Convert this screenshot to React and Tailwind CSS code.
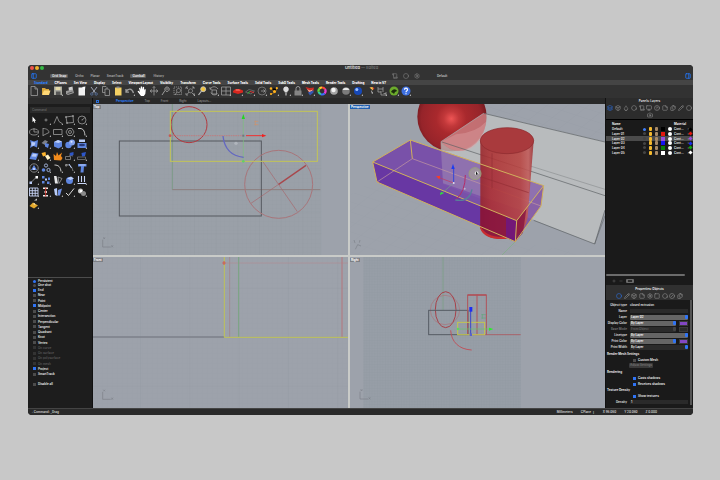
import React, { useState } from 'react';
import {
    Box,
    Circle,
    Files,
    Hexagon,
    Layers,
    Monitor,
    PanelLeft,
    PanelRight,
    Pencil,
    Plus,
    Minus,
    Settings,
    Square,
    StickyNote,
    CircleHelp,
    Droplet,
    Camera,
    CircleSlash,
    Scroll,
} from 'lucide-react';

const toggles = [
    { label: 'Grid Snap', on: true },
    { label: 'Ortho', on: false },
    { label: 'Planar', on: false },
    { label: 'SmartTrack', on: false },
    { label: 'Gumball', on: true },
    { label: 'History', on: false },
];

const toolTabs = [
    'Standard', 'CPlanes', 'Set View', 'Display', 'Select', 'Viewport Layout',
    'Visibility', 'Transform', 'Curve Tools', 'Surface Tools', 'Solid Tools',
    'SubD Tools', 'Mesh Tools', 'Render Tools', 'Drafting', 'New in V7',
];

const viewTabs = ['Perspective', 'Top', 'Front', 'Right', 'Layouts...'];

const line = { fill: 'none', stroke: '#9c9c9c', strokeWidth: 0.8 };

// Every glyph is drawn on a 12 x 12 grid
const standardTools = [
    { id: 'New', art: <path {...line} d="M3 1.5h4l2.5 2.5v6.500H3zM7 1.500V4h2.500" /> },
    { id: 'Open', art: <><path fill="#d9a63a" d="M2 3h3l1 1h3v5.500H2z" /><path fill="#ffd876" d="M4 5.500h6.500L9 10H2z" /></> },
    { id: 'Save', more: true, art: <><path fill="#a9a9a0" d="M2 1.500h8v8.500H2z" /><path fill="#565656" d="M4 6.500h4.500V10H4z" /><path fill="#e3d9a8" d="M3.500 2h5v3h-5z" /></> },
    { id: 'Print', art: <><path fill="#d0d0d0" d="M4.500 2.500l4-1 .5 3.500-4 1z" /><path fill="#9b9b9b" d="M2 6l7-1.500 1 3.500-6 2-2-1z" /><path fill="#4f4f4f" d="M3.500 8l5-1.500v1l-5 1.500z" /></> },
    { id: 'Properties', art: <><path fill="#f1f1f1" d="M2.500 2.500h5.500l1 1V10.500h-6.500z" /><path fill="#fff" d="M6 2l3.500-.5-1 3.500z" /></> },
    { id: 'Cut', art: <><path fill="none" stroke="#aeb6c4" strokeWidth="0.9" d="M3 2l4.500 6M9 2L4.500 8" /><circle cx="3.800" cy="9" r="1.200" fill="none" stroke="#53698f" /><circle cx="8.200" cy="9" r="1.200" fill="none" stroke="#53698f" /></> },
    { id: 'Copy', art: <><path {...line} d="M2.500 1.500H6l1 1v5H2.500z" /><path fill="#333" stroke="#9c9c9c" strokeWidth="0.800" d="M5 4h3.500l1 1v5.500H5z" /></> },
    { id: 'Paste', art: <><path fill="#f2cf63" d="M3 2.500h6.500v8H3z" /><path fill="#8d8d8d" d="M4.500 1.500h3v1.800h-3z" /></> },
    { id: 'Undo', more: true, art: <path fill="none" stroke="#9c9c9c" strokeWidth="1.300" d="M2 7c2-4 6-4 7.500 1M2 4v3.200h3" /> },
    { id: 'Pan', art: <path fill="#fff" d="M3 3l1.200-.3.600 2V1.500h1.200l.5 3 .4-2.700 1.200.2v3.500l.7-1.500 1 .5-.5 4.500-1.500 2H5L1.500 6.500l1-.8 1.500 1.200z" /> },
    { id: 'Rotate view', art: <path fill="none" stroke="#929292" strokeWidth="0.900" d="M6 1.500v9M2 6h8M4 4.500L2 6l2 1.500M8 4.500L10 6 8 7.500M4.800 2.800L6 1.500l1.200 1.300" /> },
    { id: 'Zoom', art: <path fill="none" stroke="#9c9c9c" strokeWidth="1" d="M5 5.500L2 10M7 2a2.200 2.200 0 1 0 .1 0M5.500 4h3" /> },
    { id: 'Zoom window', art: <><path {...line} strokeDasharray="1.200 .8" d="M2 2h7.500v7.500H2z" /><path {...line} d="M6.500 3.500a2 2 0 1 0 .1 0M5 7l-2 3" /></> },
    { id: 'Zoom extents', more: true, art: <path {...line} d="M2 4V2h2M8 2h2v2M10 8v2M2 8v2h2M6.500 3.800a2 2 0 1 0 .1 0M5 7L3 9.500M8 8l2 2M2 2l2 2M10 2L8.500 3.500" /> },
    { id: 'Zoom selected', art: <><circle cx="7.200" cy="4.200" r="2.500" fill="#f0c33c" stroke="#c9c9c9" strokeWidth="0.800" /><path stroke="#b8b8b8" strokeWidth="1.200" d="M5.500 6L2.500 10" /></> },
    { id: 'Undo view', more: true, art: <path {...line} d="M2 4c2-3 6-3 8 0M2 2v2.200h2M4 5h4.500v4H4zM3 7.500c1 3 5 3 6.500 1" /> },
    { id: 'Four viewports', more: true, art: <path {...line} d="M1.500 2h9v8h-9zM6 2v8M1.500 6h9" /> },
    { id: 'Set view', more: true, art: <><path fill="#d8271f" d="M1 6l2.500-2h4L11 5.500v2L6 9 1 7.500z" /><path fill="#ff8a7a" d="M4 4.500h3l1.500 1H3.500z" /></> },
    { id: 'CPlane', more: true, art: <><path {...line} stroke="#6f6f6f" d="M1.500 7L5 4.500l5.500 1.500L7 9z" /><path stroke="#d33" d="M6 6.500l4 1" /><path stroke="#3b3" d="M6 6.500l-2.500 2" /></> },
    { id: 'Set named view', more: true, art: <><circle cx="6" cy="6" r="4" {...line} stroke="#7f7f7f" /><path {...line} d="M5 6h4M7.500 4.500L9 6 7.500 7.500" /></> },
    { id: 'Object snaps', more: true, art: <><path stroke="#b97a1a" strokeWidth="0.700" d="M3 3.500l4 4 2-4M3 9l4-1.500" /><g fill="#ffb21e"><circle cx="3" cy="3.500" r="1.300" /><circle cx="8.800" cy="3.200" r="1.100" /><circle cx="6.500" cy="6.500" r="1.500" /><circle cx="3" cy="9" r="1.100" /></g></> },
    { id: 'Hide', more: true, art: <><path fill="#dcdcdc" d="M6 1.500a2.700 2.700 0 0 0-1.500 5l.3 1h2.400l.3-1a2.700 2.700 0 0 0-1.500-5z" /><path fill="#8a8a8a" d="M5 8h2v2.500H5z" /></> },
    { id: 'Lock', more: true, art: <><path fill="none" stroke="#999" d="M4 6V3.500a2 2 0 0 1 4 0V6" /><path fill="#858585" d="M2.500 5.500h7v5h-7z" /></> },
    { id: 'Edit layers', more: true, art: <><path fill="#c62b23" d="M1.500 2l4 1L10 2.500 9.500 6 5.500 8z" /><path fill="#f2b29a" d="M3 4l3 1.500L9 4.500 6 8z" /><path fill="#3457b4" d="M4 7.500l5.500-2.200v2.200L6 10.500z" /></> },
    { id: 'Object colour', art: <g fill="none" strokeWidth="2.200"><path stroke="#ff4b3a" d="M6 2.500a3.500 3.500 0 0 1 3 1.700" /><path stroke="#e43bd0" d="M9 4.200A3.500 3.500 0 0 1 8.500 8.500" /><path stroke="#3b6cff" d="M8.500 8.500A3.500 3.500 0 0 1 5 9.300" /><path stroke="#30c9a0" d="M5 9.300A3.500 3.500 0 0 1 2.600 6.800" /><path stroke="#63d83a" d="M2.600 6.800A3.500 3.500 0 0 1 3.500 3.500" /><path stroke="#ffc928" d="M3.500 3.500A3.500 3.500 0 0 1 6 2.500" /></g> },
    { id: 'Shade', art: <><circle cx="6" cy="6" r="3.800" fill="#a5a5a5" /><circle cx="5.500" cy="5" r="2.200" fill="#f2f2f2" /></> },
    { id: 'Render preview', more: true, art: <><circle cx="6" cy="6" r="3.800" fill="#7b7b7b" /><path fill="#e6e6e6" d="M2.500 5a3.800 3.800 0 0 1 7 0z" /></> },
    { id: 'Render', more: true, art: <><circle cx="6" cy="6" r="4" fill="#1648b8" /><circle cx="4.800" cy="4.500" r="1.500" fill="#9cc2ff" /></> },
    { id: 'Options', art: <><path fill="#e03a2d" d="M8 2l2.500 1L9 5z" /><path fill="#ffc54a" d="M5.500 2.500L8.500 2 9 5.500z" /><path fill="#ddd" d="M7 5l2 3-1 1z" /></> },
    { id: 'Dimension', more: true, art: <path {...line} d="M2 2v5h3M2 4h5M7 2v5M5 6v4h5V7M7.500 8.500H10" /> },
    { id: 'Grasshopper', more: true, art: <><circle cx="6" cy="6" r="4.500" fill="#6cab2c" /><path fill="#1b2b0c" d="M3 7c2-4 5-3 6-1l-2 1-1 2-1-1z" /></> },
    { id: 'Help', more: true, art: <><circle cx="6" cy="6" r="4.500" fill="#3d6fe0" /><path fill="none" stroke="#fff" strokeWidth="1.200" d="M4.500 4.700c0-2 3-2 3 0C7.500 6 6 5.800 6 7.300M6 8.200v1" /></> },
];

const blue = '#5f86e0';
const pale = '#b9ccf8';

const paletteTools = [
    { id: 'Select', art: <path fill="#fff" d="M4.500 2.500v5.500l1.300-1 .8 2 .8-.4-.8-1.800h1.500z" /> },
    { id: 'Point', more: true, art: <circle cx="6" cy="6" r="1" {...line} /> },
    { id: 'Polyline', more: true, art: <path {...line} d="M2 9.500L5 2.500l2 5 3 2" /> },
    { id: 'Rectangle points', more: true, art: <path {...line} d="M2 3l7-1 .5 6.500L3 9zM1.500 2.500h1v1h-1zM8.500 1.500h1v1h-1zM2.500 8.500h1v1h-1z" /> },
    { id: 'Circle', more: true, art: <><circle cx="6" cy="6" r="4" {...line} /><path {...line} d="M6 6l3-2.500M5.500 6h1" /></> },
    { id: 'Ellipse', more: true, art: <><ellipse cx="6" cy="6" rx="4.500" ry="3" {...line} /><path {...line} d="M6 2v4h4" /></> },
    { id: 'Arc', more: true, art: <path {...line} d="M3 2v8M3 2.500c4 0 6 2 6 4L3 9.500" /> },
    { id: 'Rectangle', more: true, art: <path {...line} d="M1.500 3.500h8.500v5H1.500z" /> },
    { id: 'Polygon', more: true, art: <><path {...line} d="M4 2.500h4L10 6 8 9.500H4L2 6z" /><circle cx="6" cy="6" r="1.500" {...line} /></> },
    { id: 'Fillet', more: true, art: <path fill="none" stroke="#ccc" strokeWidth="1" d="M2 2.500h2c3 0 4.500 2 5 7" /> },
    { id: 'Surface', more: true, art: <><path fill={blue} d="M2 2l4 1.500L10 2 9 9.500 5.500 8 2 10l1-4z" /><path fill={pale} d="M3.500 4l4 .5-1 3-3 .5z" /></> },
    { id: 'Loft', more: true, art: <><path fill="#7c8089" d="M1.500 5L5 2l3 1.500L5 7z" /><path fill={blue} d="M5 5l4 1-1 4-3-1.500z" /></> },
    { id: 'Box', more: true, art: <><path fill={blue} d="M2 4l4-2 4 1.500v5L6.500 10.500 2 8.500z" /><path fill={pale} d="M2 4l4-2 4 1.500L6.500 5z" /></> },
    { id: 'Boolean', more: true, art: <><circle cx="4.500" cy="7" r="3.200" fill={blue} /><circle cx="8" cy="4.500" r="3" fill="#83a3ee" /><circle cx="7.500" cy="3.800" r="1" fill="#dfe8ff" /></> },
    { id: 'Pipe', more: true, art: <><path fill={blue} d="M1.500 5h9v5h-9z" /><path fill={pale} d="M3 1.500h6V4H3z" /><ellipse cx="6" cy="7" rx="3" ry="1.200" fill="#26397a" /></> },
    { id: 'Extrude', more: true, art: <><path fill={blue} d="M1.500 9L4 2.500l6.500 1L8 10z" /><path fill={pale} d="M3.500 6.500l1.500-3 4 .7-1 2.500z" /></> },
    { id: 'Join', more: true, art: <><path fill="#ffb62e" d="M1.500 3l4-1 .5 3.500-3 1z" /><path fill="#fff1c4" d="M5 6l3-1.500L10.500 8 7.500 10z" /></> },
    { id: 'Explode', art: <path fill="#f08a1c" d="M2 10L1.500 4l2.500 2 1-4 1.500 3.500L10 2.500 9 6l1.500 2L9 10.500z" /> },
    { id: 'Trim', more: true, art: <><path {...line} stroke="#888" d="M1.500 6.500h5v3h-5zM5 5l4 1" /><path fill="#2d56c8" d="M5.500 3l4-1v3l-3 1z" /></> },
    { id: 'Split', more: true, art: <><path {...line} stroke="#777" d="M1.500 7h8v2.500h-8z" /><path fill="#2d56c8" d="M5.500 3l4.500-1-1 4-3 .5z" /></> },
    { id: 'Group', more: true, art: <><circle cx="6" cy="6" r="4.200" {...line} /><path fill={blue} d="M3 8l3-5 3 5z" /><path fill={pale} d="M5 6h2v2H5z" /></> },
    { id: 'Ungroup', more: true, art: <><circle cx="6" cy="3.500" r="1.600" fill="none" stroke={pale} strokeWidth="0.800" /><circle cx="3.500" cy="8" r="1.800" fill={blue} /><circle cx="8.500" cy="8" r="1.600" fill="none" stroke={pale} strokeWidth="0.800" /></> },
    { id: 'Curve', more: true, art: <path fill="none" stroke="#ccc" d="M2.500 3c4 0 6 2 6.500 6.500" /> },
    { id: 'Edit points', more: true, art: <><path {...line} d="M2 3c4-1 6 2 7 6M1.500 2.500h1.500v1.500H1.500z" /><path stroke={pale} d="M5 2l2.500 4" /></> },
    { id: 'Text', art: <><path fill={blue} d="M2 2h8.500v2.500H8L7.500 10.500h-3L5 4.500H2z" /><path fill={pale} d="M3 2.500h6.500v1H3z" /></> },
    { id: 'Move', more: true, art: <><path {...line} d="M3 8.500l5-5" /><path fill={pale} d="M1.500 7.500H4V10H1.500z" /><path fill="#fff" d="M7.500 2H10v2.500H7.500z" /></> },
    { id: 'Copy objects', more: true, art: <g fill={blue}><path d="M2 2h2.500v2.500H2zM2 7h2.500v2.500H2z" /><path fill={pale} d="M5 4.500h2V6.500H5z" /><path d="M8 3.500h2V6H8zM7 7.500h2.500V10H7z" /></g> },
    { id: 'Rotate', more: true, art: <><path fill="#e8e8e8" d="M2 2h2.500L6 9.500H3z" /><path {...line} d="M6 3l4 1.500L7 9.500z" /></> },
    { id: 'Scale', more: true, art: <><circle cx="5.500" cy="6.500" r="3.500" fill={blue} /><path fill={pale} d="M3 4.500L7 2.500l3 2L6.500 6z" /></> },
    { id: 'Array', more: true, art: <path fill="none" stroke="#c9d6f8" strokeWidth="1.100" d="M2.500 2v6M5.500 2v6M8.500 2v6M1.500 9.500h8.500" /> },
    { id: 'Grid array', more: true, art: <path fill="none" stroke="#c9d6f8" strokeWidth="0.900" d="M1.500 2h8.500v8H1.500zM4.300 2v8M7.200 2v8M1.500 4.700H10M1.500 7.300H10" /> },
    { id: 'Align', more: true, art: <><path fill="#f0eeee" d="M3 1.500h5V3H3zM4.500 5h2.500v2H4.500zM3 9h5v1.500H3z" /><path stroke="#d3362c" d="M5.700 1.500v9" /></> },
    { id: 'Bend', more: true, art: <><path fill={pale} d="M2 3l3-1 .5 8-2.500-1z" /><path fill="#6f91e6" d="M6 4l4-1.500L8 9.500H6z" /></> },
    { id: 'Check', more: true, art: <path fill="none" stroke="#ddd" strokeWidth="1" d="M2 7l2.500 2.500L10 2.500" /> },
    { id: 'Analyze', more: true, art: <><circle cx="4.500" cy="5" r="2.500" fill="#cfcfcf" /><circle cx="7.500" cy="7.500" r="2.500" fill="#8b8b8b" /><path fill="#fff" d="M4 4h2v2H4z" /></> },
    { id: 'Layers', more: true, art: <><path fill="#e3a92d" d="M1.500 8L5 4.500l5 3L6 10.500z" /><path fill="#fff0c2" d="M5 6l1.500-1 1 2z" /><path fill="#ccc" d="M6 2.500L9 .5v2z" /></> },
];

const osnaps = [
    { label: 'End', on: true }, { label: 'Near' }, { label: 'Point' },
    { label: 'Midpoint', on: true }, { label: 'Center' }, { label: 'Intersection' },
    { label: 'Perpendicular' }, { label: 'Tangent' }, { label: 'Quadrant' },
    { label: 'Knot' }, { label: 'Vertex' }, { label: 'On curve', dim: true },
    { label: 'On surface', dim: true }, { label: 'On polysurface', dim: true },
    { label: 'On mesh', dim: true }, { label: 'Project', on: true }, { label: 'SmartTrack' },
];

const layers = [
    { name: 'Default', swatch: 'bg-black', dot: 'bg-black', current: true },
    { name: 'Layer 01', swatch: 'bg-[#e3170f]', dot: 'bg-[#e3170f]' },
    { name: 'Layer 02', swatch: 'bg-[#9650d8]', dot: 'bg-[#9650d8]', selected: true },
    { name: 'Layer 03', swatch: 'bg-[#1414f0]', dot: 'bg-[#1a2cf0]' },
    { name: 'Layer 04', swatch: 'bg-[#0c7d0c]', dot: 'bg-[#12a012]' },
    { name: 'Layer 05', swatch: 'bg-white', dot: 'bg-white' },
];

const layerPanelIcons = [Layers, Box, Droplet, Hexagon, Scroll, Monitor, CircleHelp, StickyNote, Files, Pencil, Circle];
const propertyIcons = [Circle, Pencil, Box, StickyNote, Settings, Square, Hexagon, CircleSlash, Files];

const ToolButton = ({ tool }) => (
    <button aria-label={tool.id} className="size-3 shrink-0">
        <svg viewBox="0 0 12 12" className="size-3">
            {tool.art}
            {tool.more && <path fill="#ddd" d="M9.500 10.800L11 9.300v1.500z" />}
        </svg>
    </button>
);

const Check = ({ label, on, dim, type = 'checkbox', name }) => (
    <label className={`flex items-center gap-0.5 h-1 font-semibold ${dim ? 'text-[#5a5a5a]' : 'text-[#f0f0f0]'}`}>
        <input
            type={type}
            name={name}
            defaultChecked={on}
            disabled={dim}
            className={`appearance-none size-[3px] bg-[#4c4c4c] checked:bg-[#2f74f5] disabled:bg-[#333] ${type === 'radio' ? 'rounded-full' : ''}`}
        />
        {label}
    </label>
);

const WindowHeader = () => (
    <header className="bg-[#333]">
        <div className="flex h-1.5 items-center px-0.5">
            <div className="flex gap-px">
                <button aria-label="Close" className="size-1 rounded-full bg-[#f0524b]" />
                <button aria-label="Minimize" className="size-1 rounded-full bg-[#f0b32e]" />
                <button aria-label="Full screen" className="size-1 rounded-full bg-[#35bb45]" />
            </div>
            <h1 className="flex-1 pr-3 text-center text-[4px] font-semibold text-[#e0e0e0]">
                Untitled <span className="font-normal text-[#8e8e8e]">— Edited</span>
            </h1>
        </div>

        <div className="flex h-[9px] items-center pl-[3px] pr-0.5">
            <button aria-label="Toggle left sidebar"><PanelLeft className="size-1.5 text-[#2479ff]" strokeWidth={3} /></button>
            <div className="ml-[13px] flex flex-7 items-center gap-[7px]">
                {toggles.map((t) => (
                    <button
                        key={t.label}
                        className={`h-1 rounded-[1px] font-semibold leading-[4px] ${t.on ? 'bg-[#5b5b5b] px-0.5 text-white' : 'text-[#b4b4b4]'}`}
                    >
                        {t.label}
                    </button>
                ))}
            </div>
            <div className="flex flex-6 items-center gap-[5px] text-[#8a8a8a]">
                <Scroll className="size-1.5" />
                <Circle className="size-1.5" />
                <Settings className="size-1.5" />
                <span className="ml-3 font-semibold text-[#c5c5c5]">Default</span>
            </div>
            <button aria-label="Toggle right sidebar"><PanelRight className="size-1.5 text-[#2479ff]" strokeWidth={3} /></button>
        </div>

        <nav className="flex h-[5px] items-center gap-[7px] bg-[#454545] px-1.5 font-extrabold text-white">
            {toolTabs.map((tab, i) => (
                <a key={tab} href="#tools" className={`whitespace-nowrap ${i === 0 ? 'text-[#2b80ff]' : ''}`}>{tab}</a>
            ))}
        </nav>

        <div className="flex h-[13px] bg-[#323232]">
            {standardTools.map((tool) => <ToolButton key={tool.id} tool={tool} />)}
        </div>
    </header>
);

const LeftPanel = () => (
    <aside className="flex w-[65px] shrink-0 flex-col border-r border-[#111] bg-[#1d1d1d]">
        <div className="h-1.5 bg-[#2c2c2c]" />
        <div className="px-0.5 pt-[3px]">
            <input
                aria-label="Command"
                placeholder="Command"
                className="block h-1.5 w-full bg-[#2b2b2b] px-0.5 text-[3px] placeholder:text-[#777]"
            />
        </div>
        <div className="mt-px grid w-[60px] grid-cols-5">
            {paletteTools.map((tool) => <ToolButton key={tool.id} tool={tool} />)}
        </div>
        <div className="mt-auto flex h-[131px] flex-col border-t border-[#4c4c4c] pl-[5px] pt-px">
            <Check type="radio" name="snapmode" label="Persistent" on />
            <Check type="radio" name="snapmode" label="One shot" />
            <div className="mt-px mb-1.5 flex h-[88px] flex-col justify-between">
                {osnaps.map((s) => <Check key={s.label} {...s} />)}
            </div>
            <Check label="Disable all" />
        </div>
    </aside>
);

const Viewport = ({ title, active, viewBox, children }) => (
    <section className="relative min-h-0 min-w-0 overflow-hidden bg-[#9da2ab]">
        <svg viewBox={viewBox} preserveAspectRatio="xMinYMin slice" className="absolute inset-0 size-full">
            {children}
        </svg>
        <button className={`absolute left-0 top-px h-1 px-px text-[3px] leading-[4px] font-bold text-white ${active ? 'bg-[#1f5fb0]' : 'bg-[#7d8085]'}`}>
            {title}
        </button>
    </section>
);

const AxisMark = ({ x, y }) => (
    <g fill="none" stroke="#7c8188" strokeWidth="2">
        <path d={`M${x} ${y - 22}v22h24`} />
        <path d={`M${x + 2} ${y - 29}l5 5M${x + 7} ${y - 29}l-5 5M${x + 26} ${y - 5}l5 6M${x + 31} ${y - 5}l-5 6`} />
    </g>
);

const TopView = () => (
    <Viewport title="Top" viewBox="9 12 765 453">
        <defs>
            <pattern id="gridTop" width="13" height="13" patternUnits="userSpaceOnUse">
                <path d="M0 0h13M0 0v13" stroke="#8e959e" strokeWidth="1" fill="none" />
            </pattern>
            <pattern id="gridTopMajor" x="52" y="9" width="65" height="65" patternUnits="userSpaceOnUse">
                <path d="M0 0h65M0 0v65" stroke="#878e97" strokeWidth="1.500" fill="none" />
            </pattern>
        </defs>
        <rect x="9" y="12" width="685" height="456" fill="#9aa0a8" />
        <rect x="9" y="12" width="685" height="456" fill="url(#gridTop)" opacity="0.600" />
        <rect x="9" y="12" width="685" height="456" fill="url(#gridTopMajor)" opacity="0.500" />
        <g fill="none" strokeWidth="3">
            <path d="M247 12v257" stroke="#6f9a78" strokeWidth="2" />
            <path d="M247 269h444" stroke="#8d7d7d" />
            <rect x="88" y="123" width="426" height="225" stroke="#55595f" />
            <circle cx="566" cy="253" r="102" stroke="#a8757a" />
            <path d="M483 310l83-57M518 184l104 151" stroke="#a8666b" strokeWidth="2" />
            <path d="M566 253l82-57" stroke="#a8474c" strokeWidth="4" />
            <circle cx="297" cy="74" r="54" stroke="#b33a40" />
            <rect x="241" y="34" width="441" height="150" stroke="#c3c556" />
            <path d="M240 107h220" stroke="#cf6f6f" strokeWidth="2" strokeDasharray="5 2" />
            <path d="M468 107h48" stroke="#f03030" />
            <path d="M460 50v134" stroke="#7ec07e" strokeWidth="2" />
            <path d="M399 108c4 38 26 60 62 64" stroke="#6468c0" strokeWidth="4" />
            <path d="M493 64h12M493 74h12M496 62v14" stroke="#d29268" strokeWidth="2" />
        </g>
        <path d="M516 102l13 5-13 5z" fill="#f02020" />
        <path d="M455 57l5-15 5 15z" fill="#22d522" />
        <rect x="457" y="104" width="6" height="6" fill="#707580" />
        <circle cx="460" cy="184" r="4" fill="#65cf65" />
        <circle cx="438" cy="130" r="5" fill="#b0b5bc" />
        <circle cx="240" cy="107" r="4" fill="#c65a55" />
        <AxisMark x={38} y={441} />
    </Viewport>
);

const PerspectiveView = () => (
    <Viewport title="Perspective" active viewBox="12 12 765 453">
        <defs>
            <radialGradient id="ball" cx="0.490" cy="0.530" r="0.540">
                <stop offset="0" stopColor="#ee5555" />
                <stop offset="0.200" stopColor="#c2383a" />
                <stop offset="0.400" stopColor="#a9292d" />
                <stop offset="0.800" stopColor="#96242a" />
                <stop offset="1" stopColor="#6d181d" />
            </radialGradient>
            <linearGradient id="tube">
                <stop offset="0" stopColor="#99252a" />
                <stop offset="0.200" stopColor="#ad3032" />
                <stop offset="0.750" stopColor="#b84340" />
                <stop offset="0.900" stopColor="#c25a58" />
                <stop offset="1" stopColor="#9c3034" />
            </linearGradient>
            <pattern id="gridPersp" width="44" height="30" patternUnits="userSpaceOnUse" patternTransform="skewY(18) skewX(-42)">
                <path d="M0 0h44M0 0v30" stroke="#8b929c" strokeWidth="1.500" fill="none" />
            </pattern>
        </defs>
        <path d="M12 285L90 238 510 425 778 470H12z" fill="url(#gridPersp)" opacity="0.350" />
        <path d="M420 12h357v112L413 40z" fill="url(#gridPersp)" opacity="0.450" />
        <path d="M508 425l-45 45" stroke="#7fb083" strokeWidth="2" />
        <circle cx="318" cy="50" r="104" fill="url(#ball)" />
        <path d="M285 125L413 40 777 125V330L746 432 291 252z" fill="#c2c5c4" fillOpacity="0.720" />
        <path d="M413 40l7 0q4 26-8 58-16 36-56 53-40 8-71-26z" fill="#c95358" fillOpacity="0.600" />
        <path d="M285 125l45-22q60-5 90-38-6 58-50 84-50 14-85-24z" fill="#dfa5a7" fillOpacity="0.400" />
        <g fill="none" stroke="#5b5f62" strokeWidth="2">
            <path d="M413 40l364 86M285 125l492 162M563 361l183 71 31-102" />
            <path d="M746 432l31-85" strokeWidth="1.500" />
            <path d="M553 198l224 70" stroke="#7e8284" strokeWidth="1.500" />
            <path d="M285 125L413 40M285 125l6 125" stroke="#a9abad" />
        </g>
        <path d="M80 186L193 120 593 257 512 362z" fill="#713fa8" fillOpacity="0.820" />
        <path d="M80 186L512 362 508 425 93 246z" fill="#632ba2" fillOpacity="0.900" />
        <path d="M512 362l81-105-8 61-77 107z" fill="#743a9e" fillOpacity="0.700" />
        <path d="M285 151l308 106-60 76-242-83z" fill="#a593b4" fillOpacity="0.450" />
        <path d="M93 246l106-70 386 142" fill="none" stroke="#c59ca0" strokeWidth="2" />
        <path d="M403 122c5-50 155-52 160 0l-18 230q-6 40-40 60-80 18-102-28z" fill="url(#tube)" fillOpacity="0.880" />
        <ellipse cx="483" cy="122" rx="80" ry="39" fill="#a93a3d" stroke="#8c2a2f" strokeWidth="2" />
        <path d="M403 317l108 45 30-36-10 72-23 27-26-10q-50 6-79-30z" fill="#83103f" fillOpacity="0.750" />
        <path d="M480 350l32 12-4 63-28-12z" fill="#68178e" fillOpacity="0.700" />
        <path d="M403 378q20 38 79 32l-4 7q-64 2-75-31z" fill="#c92d30" />
        <path d="M438 160v105M403 230l145 48" fill="none" stroke="#932d35" strokeWidth="2" />
        <path d="M80 186L193 120 593 257 512 362zM80 186l13 60 415 179 4-63M508 425l77-107 8-61M193 120l6 56" fill="none" stroke="#d0b05c" strokeWidth="3" />
        <path d="M323 249v-48" stroke="#3545d8" strokeWidth="3" />
        <path d="M316 207l5-16 5 16z" fill="#1d3cf0" />
        <path d="M323 249l-46-17" stroke="#c2355a" strokeWidth="2" />
        <path d="M270 229l13-1-3 10z" fill="#ff3b22" />
        <path d="M323 249l-34 30" stroke="#719c8b" strokeWidth="2" />
        <path d="M281 285l4-10 9 5z" fill="#2de03a" />
        <path d="M358 225q0 50-28 73" fill="none" stroke="#b52c68" strokeWidth="3" />
        <path d="M328 300q42 8 50-32" fill="none" stroke="#597f9a" strokeWidth="4" />
        <circle cx="356" cy="266" r="3" fill="#bcb1ce" />
        <circle cx="323" cy="249" r="3" fill="#e1dcef" />
        <circle cx="387" cy="221" r="18" fill="#a8a693" fillOpacity="0.600" stroke="#98a07c" strokeWidth="3" />
        <circle cx="392" cy="220" r="6" fill="#ddd" />
        <path d="M390 214v12l3-3 4 1z" fill="#111" />
        <path d="M28 448l7-14M35 434l10 4M24 420l3 9M42 420l-2 8" fill="none" stroke="#7c8188" strokeWidth="2" />
    </Viewport>
);

const FrontView = () => (
    <Viewport title="Front" viewBox="9 15 765 453">
        <defs>
            <pattern id="gridFront" x="5" y="2" width="15" height="15" patternUnits="userSpaceOnUse">
                <path d="M0 0h15M0 0v15" stroke="#8f96a0" strokeWidth="1" fill="none" />
            </pattern>
            <pattern id="gridFrontMajor" x="2" y="107" width="148" height="147" patternUnits="userSpaceOnUse">
                <path d="M0 0h148M0 0v147" stroke="#858c96" strokeWidth="2" fill="none" />
            </pattern>
        </defs>
        <rect x="9" y="15" width="766" height="456" fill="url(#gridFront)" opacity="0.700" />
        <rect x="9" y="15" width="766" height="456" fill="url(#gridFrontMajor)" opacity="0.500" />
        <g fill="none" strokeWidth="3">
            <path d="M9 255h394" stroke="#7c818a" strokeWidth="5" />
            <path d="M403 33h372" stroke="#bd8489" strokeWidth="2" strokeDasharray="4 2" />
            <path d="M419 15v240" stroke="#a28a90" />
            <path d="M446 15v240" stroke="#79a580" />
            <path d="M756 15v240" stroke="#b5777d" />
            <path d="M403 15v241h372" stroke="#bfc257" />
        </g>
        <path d="M397 33h10M402 27v12" stroke="#d4564c" strokeWidth="3" />
        <AxisMark x={38} y={442} />
    </Viewport>
);

const RightView = () => (
    <Viewport title="Right" viewBox="12 15 765 453">
        <defs>
            <pattern id="gridRight" x="5" y="0" width="8" height="8" patternUnits="userSpaceOnUse">
                <path d="M0 0h8M0 0v8" stroke="#858d96" strokeWidth="1" fill="none" />
            </pattern>
        </defs>
        <rect x="52" y="15" width="473" height="456" fill="#979ea7" />
        <rect x="52" y="15" width="473" height="456" fill="url(#gridRight)" opacity="0.600" />
        <g fill="none" strokeWidth="3">
            <path d="M291 15v160" stroke="#76a07e" strokeWidth="2" />
            <path d="M368 248h156" stroke="#a8636a" />
            <circle cx="297" cy="174" r="44" stroke="#aa7379" strokeWidth="2" />
            <ellipse cx="299" cy="173" rx="31" ry="54" stroke="#a84149" />
            <rect x="248" y="175" width="118" height="73" stroke="#555b64" />
            <path d="M365 248V128h56v120M393 128v120M365 130h56" stroke="#b0525a" />
            <rect x="335" y="211" width="81" height="37" stroke="#c3c54e" />
            <path d="M314 235c2 34 24 57 63 59" stroke="#bd555e" />
            <path d="M374 248v-73" stroke="#3b46c9" />
            <path d="M335 231h100" stroke="#63c663" strokeWidth="2" />
            <path d="M406 188h14M406 198h14M409 186v14" stroke="#62a77c" strokeWidth="2" />
        </g>
        <path d="M370 165h9v14h-9z" fill="#1c2cf5" />
        <path d="M429 227l13 4-13 5z" fill="#28f028" />
        <circle cx="336" cy="231" r="4" fill="#5ed65e" />
        <path d="M371 244h7v8h-7z" fill="#5b62c8" />
        <AxisMark x={42} y={441} />
    </Viewport>
);

const LayersPanel = () => (
    <section className="flex flex-1 flex-col">
        <div className="border-b border-black bg-[#2c2c2c]">
            <h2 className="flex h-1.5 items-center justify-center font-bold text-[#ddd]">Panels: Layers</h2>
            <div className="flex h-[7px] items-center justify-between px-px text-[#9a9a9a]">
                {layerPanelIcons.map((Icon, i) => (
                    <button key={i} aria-label={`Panel ${i + 1}`}>
                        <Icon className={`size-1.5 ${i === 0 ? 'text-[#2f78f5]' : ''}`} />
                    </button>
                ))}
            </div>
            <button aria-label="Snapshots" className="mx-auto block h-2"><Camera className="size-1.5 text-[#9a9a9a]" /></button>
        </div>
        <table className="mt-px h-[34px] w-full font-semibold leading-[4px] text-[#f0f0f0]">
            <thead>
                <tr className="h-1.5 text-left">
                    <th className="p-0 pl-1.5" colSpan={6}>Name</th>
                    <th className="p-0" colSpan={3}>Material</th>
                </tr>
            </thead>
            <tbody>
                {layers.map((l) => (
                    <tr key={l.name} className={l.selected ? 'bg-[#4b4b4b]' : ''}>
                        <td className="w-[37px] whitespace-nowrap p-0 pl-1.5">{l.name}</td>
                        <td className="w-1.5 p-0"><span className={`block size-[3px] rounded-full ${l.current ? 'bg-[#3f7df5]' : 'bg-[#444]'}`} /></td>
                        <td className="w-1.5 p-0"><span className="block h-1 w-[3px] rounded-[1px] bg-[#f5b92e]" /></td>
                        <td className="w-1.5 p-0"><span className="block h-1 w-[3px] rounded-[1px] bg-[#a88a66]" /></td>
                        <td className="w-[7px] p-0"><span className={`block h-1 w-1 ${l.swatch}`} /></td>
                        <td className="w-1.5 p-0"><span className="block size-1 rounded-full bg-white" /></td>
                        <td className="p-0">Cont...</td>
                        <td className="p-0">:</td>
                        <td className="w-1 p-0"><span className={`block size-[3px] rotate-45 ${l.dot}`} /></td>
                    </tr>
                ))}
            </tbody>
        </table>
        <div className="mt-auto mr-2 h-0.5 rounded-full bg-[#6b6b6b]" />
        <div className="flex h-[9px] items-center gap-[3px] px-1.5 text-[#8a8a8a]">
            <button aria-label="Add"><Plus className="size-1" /></button>
            <button aria-label="Remove"><Minus className="size-1" /></button>
            <button aria-label="Layer menu" className="flex h-1 w-2 items-center justify-center rounded-[1px] bg-[#6a6a6a]">
                <span className="h-0.5 w-1 bg-[#2a2a2a]" />
            </button>
        </div>
    </section>
);

const Field = ({ id, label, children }) => (
    <div className="flex h-1.5 items-center gap-[3px]">
        <label htmlFor={id} className="flex w-5 shrink-0 justify-end whitespace-nowrap">{label}</label>
        {children}
    </div>
);

const Picker = ({ id, value, swatch, disabled, dark }) => (
    <>
        <span className={`flex h-[5px] flex-1 items-center rounded-[1px] ${disabled || dark ? 'bg-[#2b2b2b]' : 'bg-[#656565]'}`}>
            <select id={id} disabled={disabled} className={`h-1 w-full appearance-none px-px text-[3px] font-semibold leading-[4px] ${disabled ? 'text-[#666]' : 'text-white'}`}>
                <option>{value}</option>
            </select>
            <span className={`h-1 w-[3px] shrink-0 rounded-[1px] ${disabled ? 'bg-[#444]' : 'bg-[#2f74f5]'}`} />
        </span>
        {swatch && <button aria-label={`${id} swatch`} className={`h-[5px] w-[9px] border border-[#3a3a3a] ${disabled ? 'bg-[#2b2b2b]' : 'bg-[#8247c4]'}`} />}
    </>
);

const PropertiesPanel = () => {
    const [density, setDensity] = useState('1');

    return (
        <section className="h-[123px] font-semibold text-[#e6e6e6]">
            <div className="bg-[#303030]">
                <h2 className="flex h-[7px] items-center justify-center font-bold">Properties: Objects</h2>
                <div className="flex h-2 items-center justify-between px-2.5 text-[#9c9c9c]">
                    {propertyIcons.map((Icon, i) => (
                        <button key={i} aria-label={`Page ${i + 1}`}>
                            <Icon className={`size-1.5 ${i === 0 ? 'text-[#2f78f5]' : ''}`} />
                        </button>
                    ))}
                </div>
            </div>
            <div className="mr-px border-r-2 border-[#555] pl-px pr-0.5 pt-0.5">
                <div className="flex h-1.5 items-center gap-[3px]">
                    <span className="flex w-5 justify-end whitespace-nowrap">Object type</span>
                    <span>closed extrusion</span>
                </div>
                <Field id="name" label="Name">
                    <input id="name" className="h-1 min-w-0 flex-1 bg-[#2a2a2a] text-[3px]" />
                </Field>
                <Field id="layer" label="Layer"><Picker id="layer" value="Layer 02" /></Field>
                <Field id="display" label="Display Color"><Picker id="display" value="By Layer" swatch /></Field>
                <div className="text-[#777]">
                    <Field id="base" label="Base Mode"><Picker id="base" value="From Object" swatch disabled /></Field>
                </div>
                <Field id="linetype" label="Linetype"><Picker id="linetype" value="By Layer" /></Field>
                <Field id="print" label="Print Color"><Picker id="print" value="By Layer" swatch /></Field>
                <Field id="width" label="Print Width"><Picker id="width" value="By Layer" dark /></Field>
                <h3 className="flex h-[7px] items-center font-bold">Render Mesh Settings</h3>
                <div className="pl-[26px]">
                    <div className="flex h-1.5 items-center"><Check label="Custom Mesh" /></div>
                    <button disabled className="-ml-1 block h-[5px] rounded-[1px] bg-[#3a3a3a] px-px leading-[5px] text-[#777]">Adjust Settings</button>
                </div>
                <h3 className="flex h-[7px] items-center font-bold">Rendering</h3>
                <div className="pl-[26px]">
                    <div className="flex h-1.5 items-center"><Check label="Casts shadows" on /></div>
                    <div className="flex h-1.5 items-center"><Check label="Receives shadows" on /></div>
                </div>
                <h3 className="flex h-1.5 items-center font-bold">Texture Density</h3>
                <div className="flex h-1.5 items-center pl-[26px]"><Check label="Show textures" on /></div>
                <Field id="density" label="Density">
                    <input
                        id="density"
                        value={density}
                        onChange={(e) => setDensity(e.target.value)}
                        className="h-1 min-w-0 flex-1 bg-[#2a2a2a] px-px text-[3px]"
                    />
                </Field>
            </div>
        </section>
    );
};

export default function App() {
    return (
        <div className="flex h-screen bg-[#c8c8c8] py-[65px] pl-7 pr-[27px] font-[Inter,sans-serif] text-[3px] leading-[4px]">
            <div className="flex min-w-0 flex-1 flex-col overflow-hidden rounded-[4px] bg-[#1d1d1d]">
                <WindowHeader />

                <div className="flex min-h-0 flex-1">
                    <LeftPanel />

                    <main className="flex min-w-0 flex-1 flex-col">
                        <nav className="flex h-1.5 shrink-0 items-center gap-[11px] bg-[#292929] px-[3px] text-[#a0a0a0]">
                            <button aria-label="Viewport layout" className="mr-1.5 size-[3px] border border-[#2b6fd8]" />
                            {viewTabs.map((tab, i) => (
                                <a key={tab} href="#view" className={i === 0 ? 'font-bold text-[#2b80ff]' : ''}>{tab}</a>
                            ))}
                        </nav>
                        <div className="grid min-h-0 flex-1 grid-cols-2 grid-rows-2 gap-0.5 bg-[#c9cbc8]">
                            <TopView />
                            <PerspectiveView />
                            <FrontView />
                            <RightView />
                        </div>
                    </main>

                    <aside className="flex w-[88px] shrink-0 flex-col border-l border-[#111] bg-[#1a1a1a]">
                        <LayersPanel />
                        <PropertiesPanel />
                    </aside>
                </div>

                <footer className="flex h-[7px] shrink-0 items-center gap-2 border-t border-[#444] bg-[#2a2a2a] pl-1 pr-9 font-semibold text-[#d5d5d5]">
                    <span className="flex-1">▫ Command: _Drag</span>
                    <span>Millimeters</span>
                    <span>CPlane ⋮</span>
                    <span>X 96.060</span>
                    <span>Y 20.060</span>
                    <span>Z 0.000</span>
                </footer>
            </div>
        </div>
    );
}
